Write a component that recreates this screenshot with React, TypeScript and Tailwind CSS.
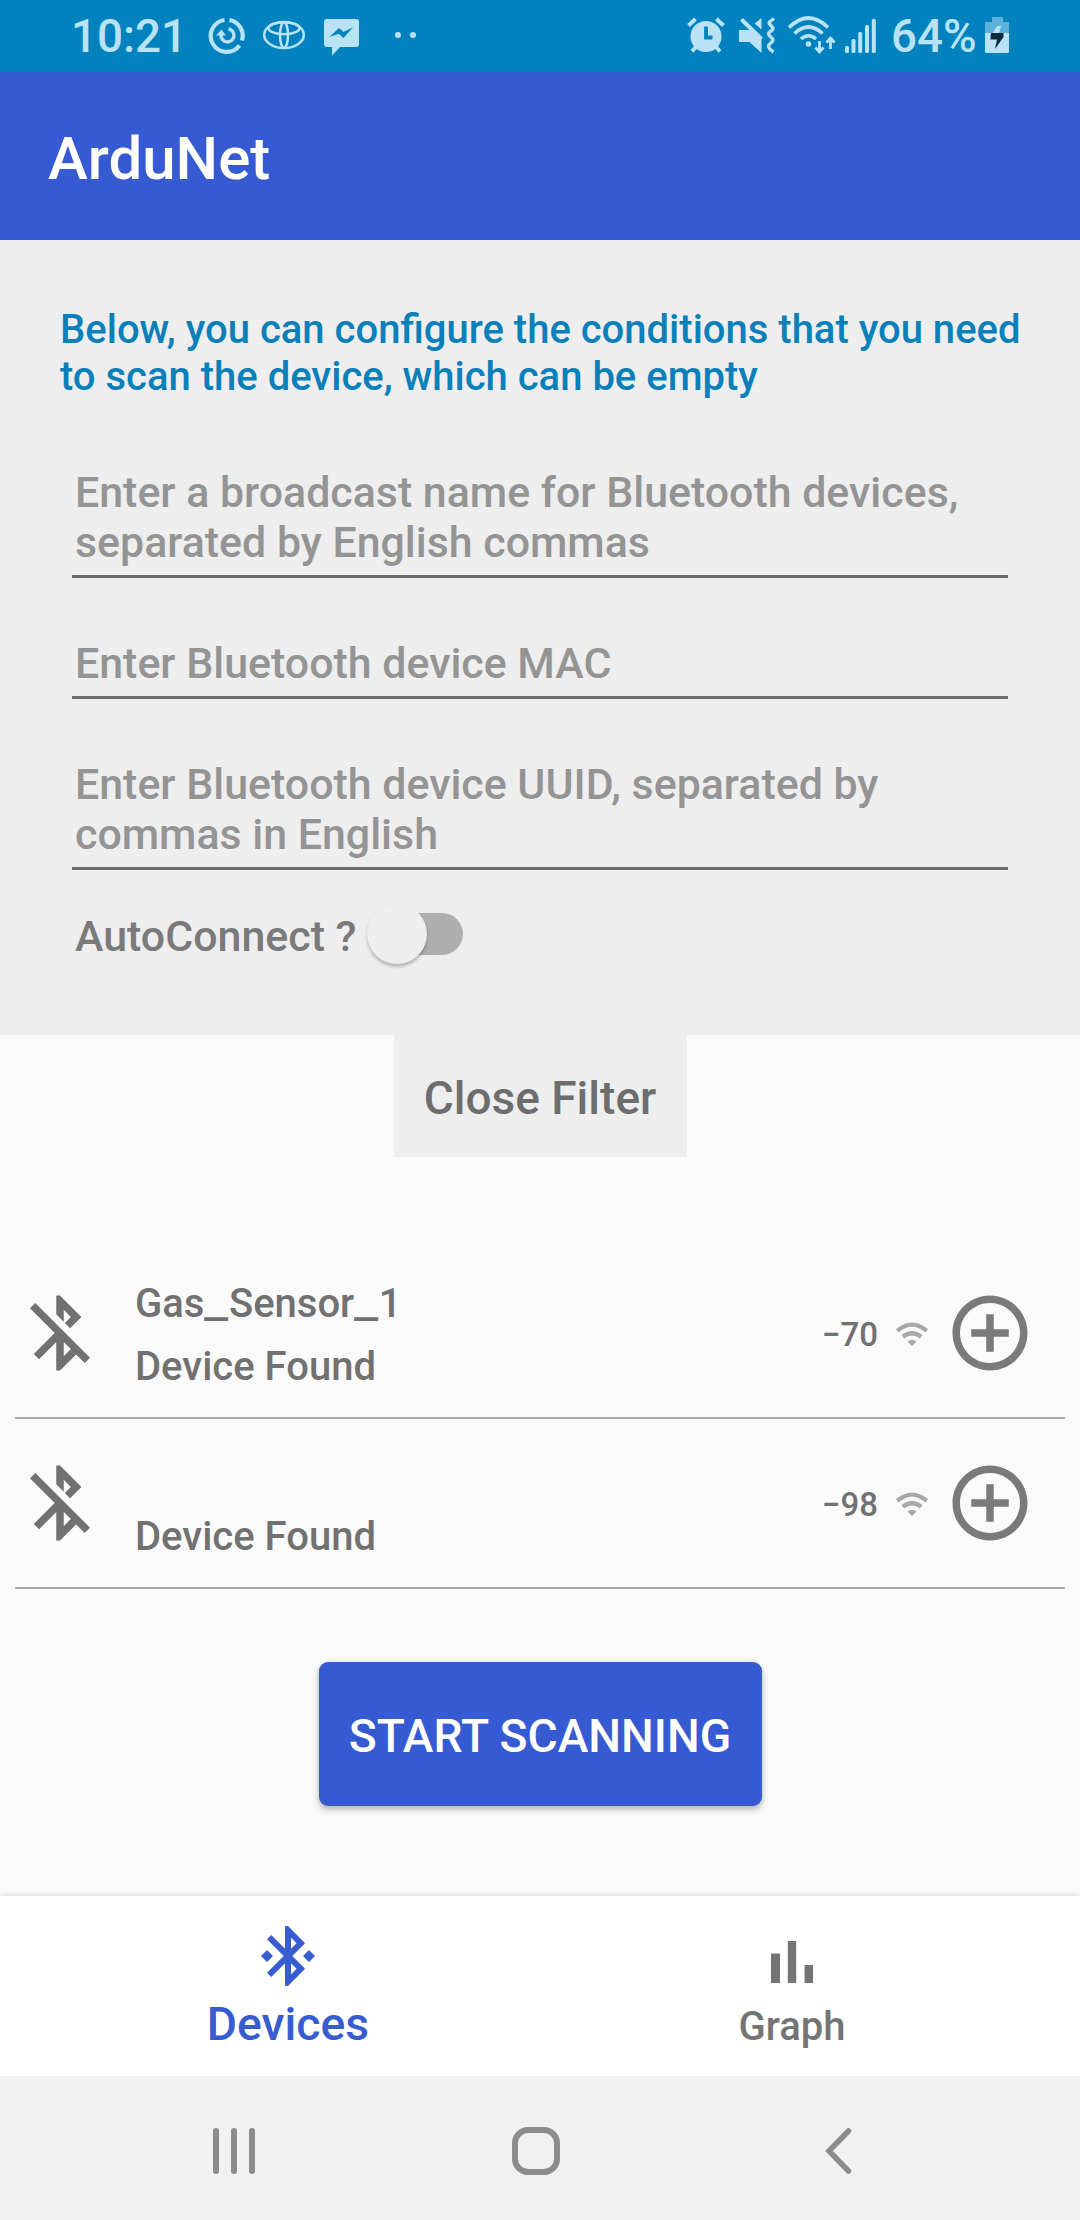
import React from 'react';

const BT_OFF =
  'M13 5.83l1.88 1.88-1.6 1.6 1.41 1.41 3.02-3.02L12 2h-1v5.03l2 2v-3.2zM5.41 4L4 5.41 10.59 12 5 17.59 6.41 19 11 14.41V22h1l4.29-4.29 2.3 2.29L20 18.59 5.41 4zM13 18.17v-3.76l1.88 1.88L13 18.17z';
const BT_CONNECTED =
  'M7 12l-2-2-2 2 2 2 2-2zm10.71-4.29L12 2h-1v7.59L6.41 5 5 6.41 10.59 12 5 17.59 6.41 19 11 14.41V22h1l5.71-5.71-4.3-4.29 4.3-4.29zM13 5.83l1.88 1.88L13 9.59V5.83zm1.88 10.46L13 18.17v-3.76l1.88 1.88zM19 10l-2 2 2 2 2-2-2-2z';
const ADD_CIRCLE =
  'M13 7h-2v4H7v2h4v4h2v-4h4v-2h-4V7zm-1-5C6.48 2 2 6.48 2 12s4.48 10 10 10 10-4.48 10-10S17.52 2 12 2zm0 18c-4.41 0-8-3.59-8-8s3.59-8 8-8 8 3.59 8 8-3.59 8-8 8z';
const BAR_CHART = 'M5 9.2h3V19H5zM10.6 5h2.8v14h-2.8zm5.6 8H19v6h-2.8z';

function StatusBar() {
  return (
    <header className="flex h-[72px] items-start bg-[#0082bf] pl-[71px] text-[#b9e2f5]">
      <span className="mt-[10px] w-[115px] whitespace-nowrap text-[45.7px] leading-[54px] font-medium">10:21</span>

      <svg className="mt-[17px] ml-[22px] h-[38px] w-[38px] shrink-0" viewBox="0 0 38 38" fill="none" stroke="currentColor">
        <path d="M21.500 3A16 16 0 0 1 34 23.500M31.500 28.500A16 16 0 1 1 16.500 3" strokeWidth="4.200" />
        <path d="M20.500 12A6.500 6.500 0 1 1 13 18" strokeWidth="3.400" />
        <path d="M8 18.500l5.500-6 4.500 6z" fill="currentColor" stroke="none" />
      </svg>

      <svg className="mt-[20px] ml-[17px] h-[31px] w-[42px] shrink-0" viewBox="0 0 42 31" fill="none" stroke="currentColor" strokeWidth="2.500">
        <ellipse cx="21" cy="15" rx="19.800" ry="13" />
        <ellipse cx="21" cy="8.200" rx="15.500" ry="6" />
        <ellipse cx="21" cy="15" rx="4" ry="12.800" />
      </svg>

      <svg className="mt-[19px] ml-[19px] h-[37px] w-[35px] shrink-0" viewBox="0 0 35 37">
        <path d="M3 0h29a3 3 0 0 1 3 3v22a3 3 0 0 1-3 3H16l-8 8.500V28H3a3 3 0 0 1-3-3V3a3 3 0 0 1 3-3z" fill="currentColor" />
        <path d="M5.500 18l9.500-9 4.500 4 9.500-4.800-9.500 10.800-4.700-4.200z" fill="#0082bf" />
      </svg>

      <div className="mt-[32px] ml-[36px] flex gap-[9px]">
        <i className="size-[6px] rounded-full bg-current" />
        <i className="size-[6px] rounded-full bg-current" />
      </div>

      <div className="mr-[71px] ml-auto flex items-start">
        <svg className="mt-[17px] h-[37px] w-[38px] shrink-0" viewBox="0 0 38 37">
          <circle cx="19" cy="19.500" r="15.500" fill="currentColor" />
          <path d="M1.500 8.500l7-6.500M36.500 8.500l-7-6.500M5 34.500l5-6M33 34.500l-5-6" stroke="currentColor" strokeWidth="4" />
          <path d="M19 9.500v11h6.500" fill="none" stroke="#0082bf" strokeWidth="3.800" />
        </svg>
        <svg className="mt-[17px] ml-[14px] h-[37px] w-[37px] shrink-0" viewBox="0 0 37 37" fill="currentColor">
          <path d="M0 13h10l3-1.500 9.500 10V36L10.500 25H0z" />
          <path d="M2.500 2.500l20 19.500" stroke="currentColor" strokeWidth="4" />
          <path d="M22.500 1v11.500L15.500 6.500z" />
          <path d="M35 1.500l-4.500 3.500c-2 2 3.500 4 3.500 6.500s-4.500 3-4.500 5.500 4.500 3.500 4.500 6-4.500 3.500-4.500 6 2 4 5 6" fill="none" stroke="currentColor" strokeWidth="3.400" />
        </svg>
        <svg className="mt-[16px] ml-[12px] h-[38px] w-[49px] shrink-0" viewBox="0 0 49 38" fill="none" stroke="currentColor" strokeWidth="3.600">
          <path d="M1 11.500q19.500-19 39 0M6.500 17.500q14-13 28 0M13 23q7.500-6.500 15 0" />
          <circle cx="20.500" cy="28" r="2.800" fill="currentColor" stroke="none" />
          <path d="M31.500 25v10.500M27.500 31.500l4 4.500 4-4.500M42.500 33V22M38.500 26.500l4-4.500 4 4.500" strokeWidth="2.800" />
        </svg>
        <svg className="mt-[18px] ml-[8px] h-[36px] w-[32px] shrink-0" viewBox="0 0 32 36" fill="currentColor">
          <rect x="0" y="28" width="4" height="7" rx="1.500" />
          <rect x="6.500" y="21" width="4" height="14" rx="1.500" />
          <rect x="13.200" y="14" width="4" height="21" rx="1.500" />
          <rect x="20" y="7" width="4" height="28" rx="1.500" />
          <rect x="26.800" y="1" width="4" height="34" rx="1.500" />
        </svg>
        <span className="mt-[10px] ml-[14px] w-[85px] text-[45.7px] leading-[54px] font-medium">64%</span>
        <svg className="mt-[17px] ml-[9px] h-[36px] w-[24px] shrink-0" viewBox="0 0 24 36">
          <path d="M7 0h11v5h6v11H0V5h7z" fill="#5cb0d9" />
          <path d="M0 16h24v18.500a1.500 1.500 0 0 1-1.500 1.500h-21A1.500 1.500 0 0 1 0 34.500z" fill="currentColor" />
          <path d="M12 9h4l-2 7H8z" fill="currentColor" />
          <path d="M6 16h12.500v4L10 32l2-9.500H5.500z" fill="#0c2a38" />
        </svg>
      </div>
    </header>
  );
}

function Field({ lines }: { lines: string[] }) {
  return (
    <div className="mx-[72px] border-b-[3px] border-[#6d6d6d] pb-2 pl-[3px] text-[42.9px] leading-[50px] text-[#949494]">
      {lines.map((line) => (
        <p key={line} className="whitespace-nowrap">{line}</p>
      ))}
    </div>
  );
}

function FilterPanel() {
  return (
    <section className="h-[795px] bg-[#eeeeee] pt-[66px] font-medium">
      <p className="pl-[60px] text-[40px] leading-[47px] whitespace-nowrap text-[#0a80ba]">
        Below, you can configure the conditions that you need
        <br />
        to scan the device, which can be empty
      </p>
      <div className="mt-[67px] flex flex-col gap-[60px]">
        <Field lines={['Enter a broadcast name for Bluetooth devices,', 'separated by English commas']} />
        <Field lines={['Enter Bluetooth device MAC']} />
        <Field lines={['Enter Bluetooth device UUID, separated by', 'commas in English']} />
      </div>
      <div className="mt-[41px] flex h-[50px] pl-[75px] text-[42.9px] leading-[50px] text-[#7a7a7a]">
        <span className="w-[292px]">AutoConnect ?</span>
        <div className="relative mt-[2px] ml-[12px] h-[42px] w-[84px] rounded-full bg-[#aeaeae]">
          <i className="absolute -top-[9px] -left-[12px] size-[60px] rounded-full bg-[#eeeeee] shadow-[0_3px_3px_rgba(0,0,0,0.22),0_0_2px_rgba(0,0,0,0.05)]" />
        </div>
      </div>
    </section>
  );
}

// Underscores are drawn wider than the font's own glyph.
function DeviceName({ name }: { name: string }) {
  return (
    <p className="h-[63px] whitespace-nowrap">
      {name.split(/(_)/).map((part, i) =>
        part === '_' ? (
          <span key={i} className="inline-block w-[24.5px]">
            <span className="inline-block origin-left scale-x-[1.35]">_</span>
          </span>
        ) : (
          <span key={i}>{part}</span>
        ),
      )}
    </p>
  );
}

function DeviceRow({ name, rssi }: { name: string; rssi: string }) {
  return (
    <div className="mx-[15px] flex h-[170px] border-b-2 border-[#a9a9a9] font-medium text-[#717171]">
      <svg className="mt-[39px] size-[90px] shrink-0" viewBox="0 0 24 24" fill="currentColor">
        <path d={BT_OFF} />
      </svg>
      <div className="mt-[31px] ml-[30px] flex-1 text-[40px] leading-[48px]">
        <DeviceName name={name} />
        <p>Device Found</p>
      </div>
      <span className="mt-[66px] w-[57px] text-[33px] leading-[40px] whitespace-nowrap">{rssi}</span>
      <svg className="mt-[73px] ml-[16px] h-[24px] w-[34px] text-[#a8a8a8]" viewBox="0 0 34 24" fill="currentColor">
        <path d="M1 7Q17-6 33 7l-2.500 3.500Q17-1 3.500 10.500zM6.500 13q10.500-8 21 0L25 16.500q-8-6-16 0zM12.500 19.500q4.500-3.500 9 0L17 24z" />
      </svg>
      <svg className="mt-[39px] mr-[30px] ml-[16px] size-[90px] shrink-0 text-[#7a7a7a]" viewBox="0 0 24 24" fill="currentColor">
        <path d={ADD_CIRCLE} />
      </svg>
    </div>
  );
}

function BottomTabs() {
  return (
    <nav className="flex h-[180px] bg-white px-9 font-medium shadow-[0_-1px_5px_rgba(0,0,0,0.12)]">
      <div className="flex flex-1 flex-col items-center pt-[24px] text-[#375bd0]">
        <svg className="size-[72px]" viewBox="0 0 24 24" fill="currentColor">
          <path d={BT_CONNECTED} />
        </svg>
        <span className="mt-[5px] text-[46.3px] leading-[54px]">Devices</span>
      </div>
      <div className="flex flex-1 flex-col items-center pt-[30px] text-[#747474]">
        <svg className="size-[72px]" viewBox="0 0 24 24" fill="currentColor">
          <path d={BAR_CHART} />
        </svg>
        <span className="mt-[5px] text-[40px] leading-[48px]">Graph</span>
      </div>
    </nav>
  );
}

function SystemNav() {
  return (
    <footer className="flex h-[144px] items-start bg-[#f1f1f1] pt-[51px] pl-[213px] text-[#8c8c8c]">
      <div className="mt-[1px] flex gap-3">
        <i className="h-[46px] w-[6px] rounded-full bg-current" />
        <i className="h-[46px] w-[6px] rounded-full bg-current" />
        <i className="h-[46px] w-[6px] rounded-full bg-current" />
      </div>
      <i className="ml-[257px] size-[48px] rounded-[16px] border-[6px] border-current" />
      <svg className="mt-[1px] ml-[264px] h-[46px] w-[29px]" viewBox="0 0 29 46" fill="none" stroke="currentColor" strokeWidth="5.500" strokeLinecap="round">
        <path d="M24.500 3L5 23l19.500 20" />
      </svg>
    </footer>
  );
}

export default function App() {
  return (
    <div className="flex h-[2220px] w-[1080px] flex-col overflow-hidden bg-[#fafafa] font-['Roboto',sans-serif]">
      <StatusBar />
      <div className="h-[168px] bg-[#365ad2] pt-[51px] pl-[48px] text-[60px] leading-[72px] font-medium text-white">ArduNet</div>
      <FilterPanel />
      <main className="flex flex-1 flex-col">
        <button className="mx-auto h-[122px] w-[293px] bg-[#eeeeee] pt-[3px] text-[46px] leading-[54px] font-medium text-[#6d6d6d]">
          Close Filter
        </button>
        <div className="mt-[92px]">
          <DeviceRow name="Gas_Sensor_1" rssi="−70" />
          <DeviceRow name="" rssi="−98" />
        </div>
        <button className="mx-auto mt-[73px] h-[144px] w-[443px] rounded-[9px] bg-[#365ad2] pt-[3px] text-[46.2px] leading-[54px] font-medium whitespace-nowrap text-white shadow-[0_4px_6px_rgba(0,0,0,0.24),0_0_4px_rgba(0,0,0,0.10)]">
          START SCANNING
        </button>
      </main>
      <BottomTabs />
      <SystemNav />
    </div>
  );
}
